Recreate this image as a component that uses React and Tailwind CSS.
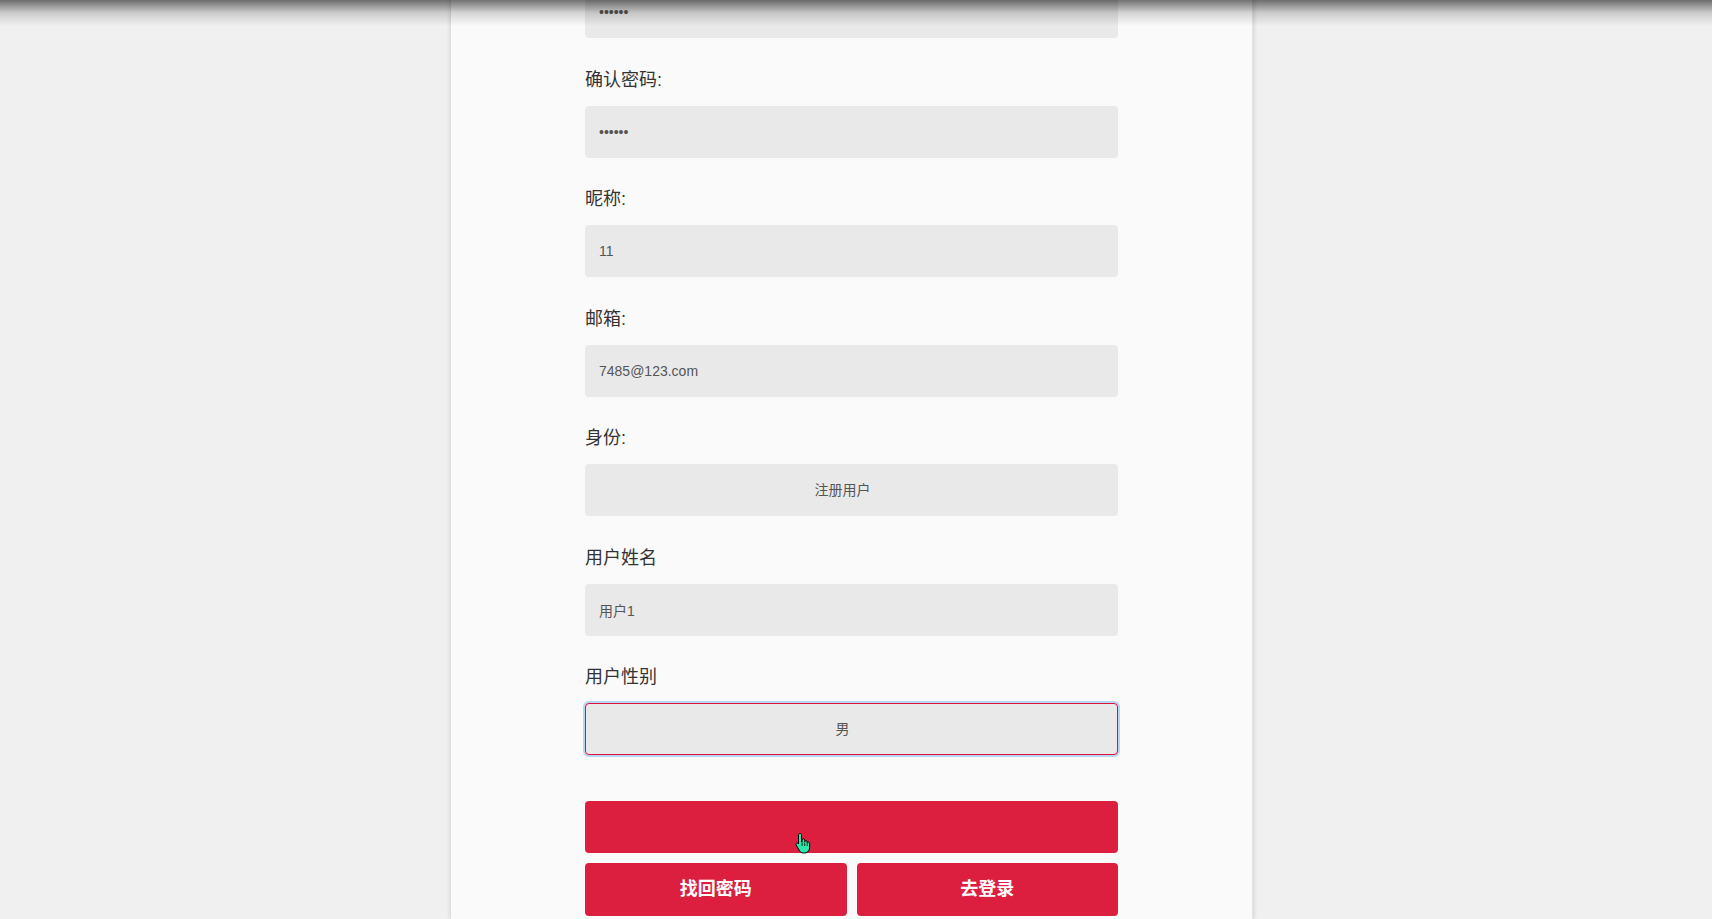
import { useState } from 'react'

const labelCls = 'h-[26px] leading-[26px] text-[18px] text-[#333]'
const inputCls =
  'mt-[13px] block w-full h-[52px] rounded-[4px] bg-[#e9e9e9] px-[14px] text-[14px] text-[#555] outline-none'

const Field = ({ label, children, first }) => (
  <div className={first ? '' : 'pt-[28.5px]'}>
    {label && <div className={labelCls}>{label}</div>}
    {children}
  </div>
)

const HandCursor = () => (
  <svg width="18" height="22" viewBox="0 0 18 22" className="absolute left-[210px] top-[31px]">
    <path
      d="M5 1.5c.9 0 1.5.6 1.5 1.5v7l.6-.1V8.2c0-.8.6-1.3 1.3-1.3s1.3.5 1.3 1.3v1.5c.2-.7.7-1 1.3-1 .7 0 1.2.5 1.2 1.2v1c.2-.5.7-.8 1.2-.8.7 0 1.2.6 1.2 1.3v4.2c0 3-2 5.4-5 5.4H8.3c-1.7 0-2.8-.8-3.7-2.1L1.2 13c-.4-.6-.3-1.3.3-1.7.6-.4 1.3-.2 1.7.3L3.5 12V3c0-.9.6-1.5 1.5-1.5z"
      fill="#2de8ad"
      stroke="#000"
      strokeWidth="1"
    />
    <path d="M7.1 10.5v3.5M9.7 10.5v3.5M12.2 11v3" stroke="#000" strokeWidth="0.8" />
  </svg>
)

const App = () => {
  const [gender, setGender] = useState('男')

  return (
    <div
      className="relative h-[919px] overflow-hidden bg-[#f0f0f0] flex justify-center pr-2"
      style={{ fontFamily: '"Liberation Sans", "Noto Sans CJK SC", sans-serif' }}
    >
      {/* card */}
      <div className="w-[802px] bg-[#fafafa] shadow-[0_0_5px_rgba(0,0,0,0.18)] border-r border-[#e2e4e4] px-[134px]">
        <div className="-mt-[27px]">
          <Field first>
            <input type="password" readOnly value="123456" className={inputCls} />
          </Field>

          <Field label="确认密码:">
            <input type="password" readOnly value="123456" className={inputCls} />
          </Field>

          <Field label="昵称:">
            <input type="text" readOnly value="11" className={inputCls} />
          </Field>

          <Field label="邮箱:">
            <input type="text" readOnly value="7485@123.com" className={inputCls} />
          </Field>

          <Field label="身份:">
            <div className={`${inputCls} flex items-center justify-center pr-[32px]`}>注册用户</div>
          </Field>

          <Field label="用户姓名">
            <input type="text" readOnly value="用户1" className={inputCls} />
          </Field>

          <Field label="用户性别">
            <div
              onClick={() => setGender(gender === '男' ? '女' : '男')}
              className={`${inputCls} flex items-center justify-center pr-[32px] border border-[#dc143c] ring-2 ring-[#b9d4f1]`}
            >
              {gender}
            </div>
          </Field>

          {/* actions */}
          <div className="relative mt-[46px] h-[52px] rounded-[4px] bg-[#dc1f3f]">
            <HandCursor />
          </div>
          <div className="mt-[10px] flex gap-[10px]">
            <button className="flex-1 h-[53px] rounded-[4px] bg-[#dc1f3f] text-white text-[18px] font-bold">
              找回密码
            </button>
            <button className="flex-1 h-[53px] rounded-[4px] bg-[#dc1f3f] text-white text-[18px] font-bold">
              去登录
            </button>
          </div>
        </div>
      </div>

      {/* top inset shadow of the viewport */}
      <div className="pointer-events-none absolute inset-x-0 top-0 h-[26px] bg-linear-to-b from-[rgba(0,0,0,0.55)] via-[rgba(0,0,0,0.15)] to-transparent" />
    </div>
  )
}

export default App
